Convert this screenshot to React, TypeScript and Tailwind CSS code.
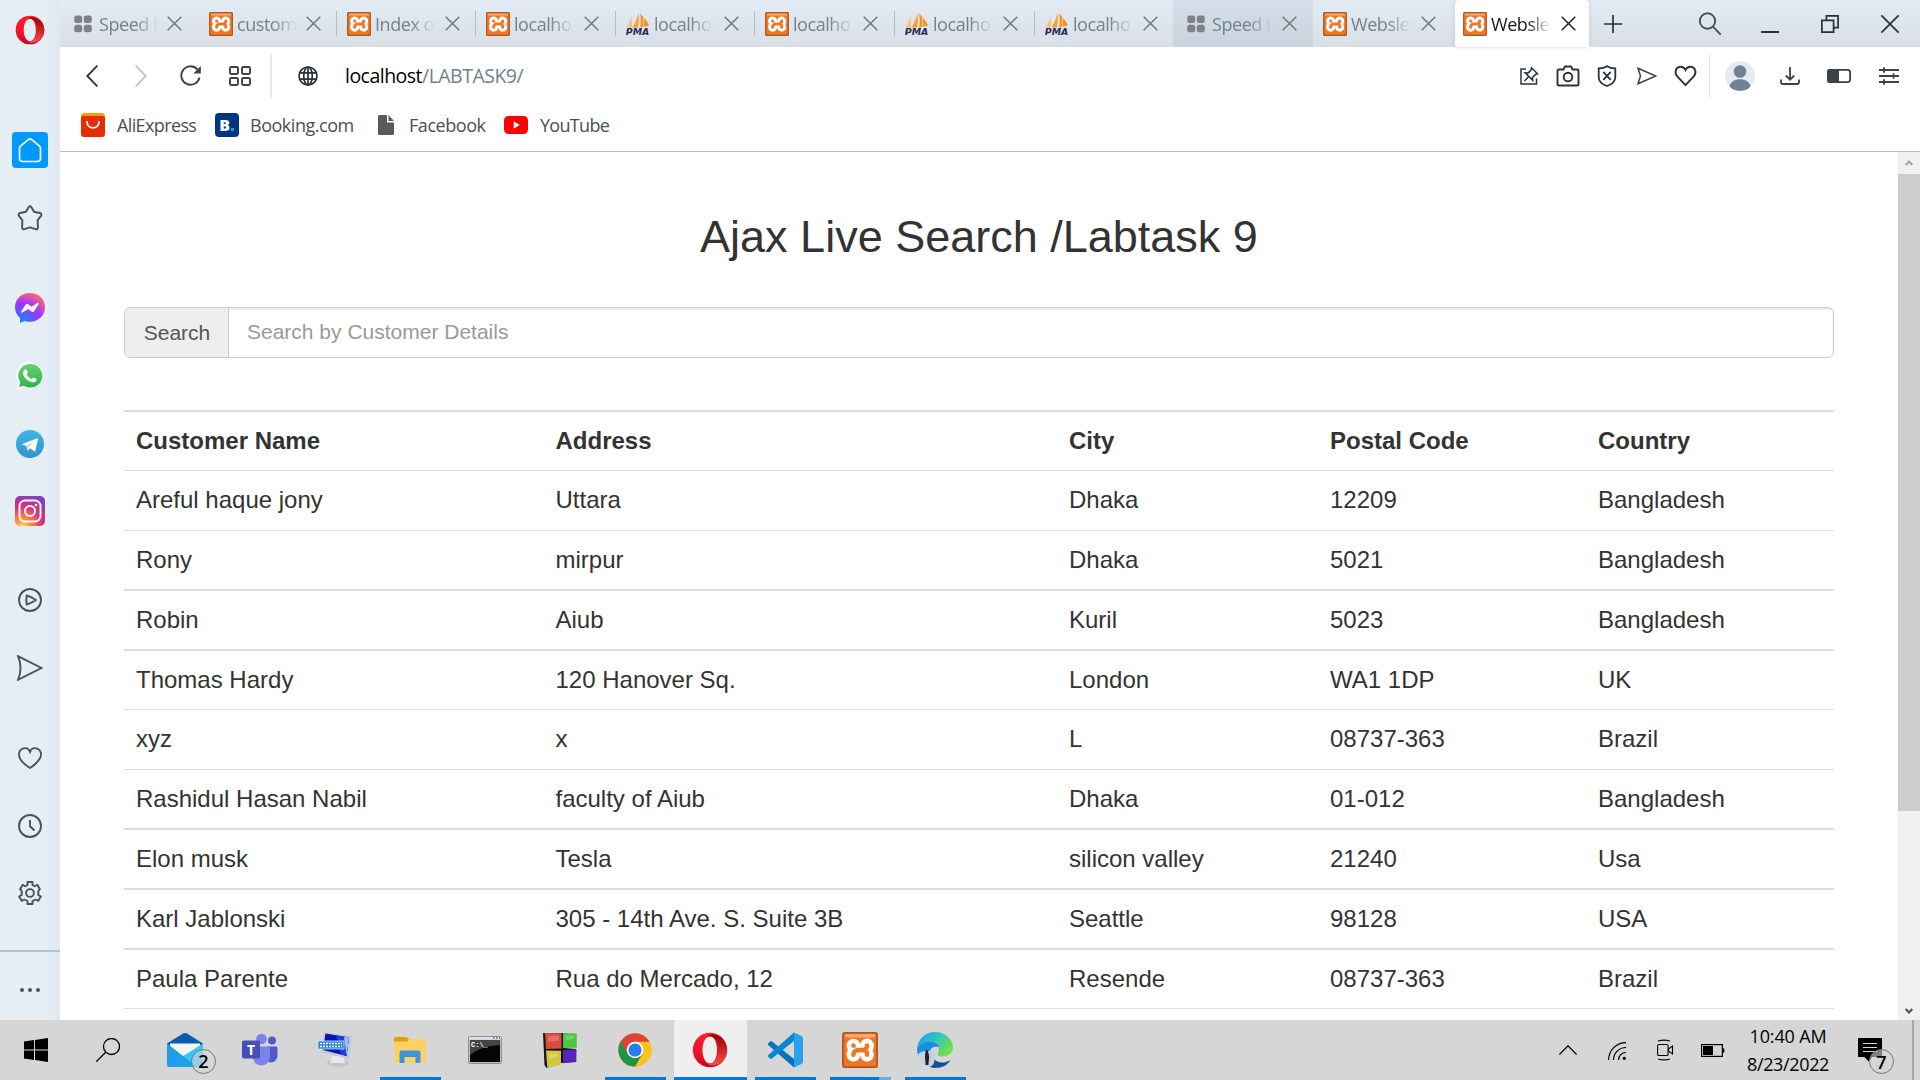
import React from "react";
import { SiXampp } from "react-icons/si";

type P = { children?: React.ReactNode };

const Xampp = ({ big = false }: { big?: boolean }) => (
  <svg viewBox="0 0 36 36" className={big ? "h-9 w-9 shrink-0" : "h-6 w-6 shrink-0"}>
    <rect x="3" y="4" width="30" height="28" fill="#fff" />
    <SiXampp x="-0.6" y="-0.4" size="37.4" color="#f07623" />
    <rect x="2.500" y="1.800" width="31" height="3.600" rx="1.800" fill="#fbc9a0" opacity=".6" />
    <rect x=".9" y=".9" width="34.200" height="34.200" rx="3.500" fill="none" stroke="#ad5a22" strokeWidth="1.800" />
  </svg>
);

const Pma = () => (
  <svg viewBox="0 0 24 24" className="h-6 w-6 shrink-0">
    <path d="M5.500 3.500 6 15.500H.8C3 12 4.700 8 5.500 3.500z" fill="#fbbf74" />
    <path d="M12.500.3C13 6 13 11 12 15.500H6.500C9.500 11 11.500 6 12.500.3z" fill="#fb9d2f" />
    <path d="M14 1.500c4 4 7.500 8 9 12l-8.700 2C15 11 15 6 14 1.500z" fill="#f98f1c" />
    <path d="M17.500 5v10" stroke="#fdd29b" strokeWidth="1" />
    <text x="-.2" y="23.300" fontFamily="DejaVu Sans" fontWeight="700" fontStyle="italic" fontSize="8.600" textLength="23.500" lengthAdjust="spacingAndGlyphs" fill="#2b2a5e">PMA</text>
  </svg>
);

const SpeedDots = () => (
  <svg viewBox="0 0 18 18" className="ml-1 mr-[3px] h-[18px] w-[18px] shrink-0" fill="#7e8286">
    <rect x=".2" y=".5" width="8" height="7.500" rx="2.500" />
    <rect x="9.800" y=".5" width="8" height="7.500" rx="2.500" />
    <rect x=".2" y="9.800" width="8" height="7.500" rx="2.500" />
    <rect x="9.800" y="9.800" width="8" height="7.500" rx="2.500" />
  </svg>
);

const Cross = ({ color }: { color: string }) => (
  <svg viewBox="0 0 15 15" className="h-[15px] w-[15px] shrink-0" stroke={color} strokeWidth="1.500" fill="none">
    <path d="M.7.7 14.300 14.300M14.300.7.7 14.300" />
  </svg>
);

const tabs = [
  { t: "Speed D", i: "s", box: "w-[136px] pl-[10px]", sep: false },
  { t: "custom", i: "x", box: "w-[141px] pl-[13px]", sep: false },
  { t: "Index o", i: "x", box: "w-[139px] pl-[10px]", sep: true },
  { t: "localho", i: "x", box: "w-[139px] pl-[10px]", sep: true },
  { t: "localho", i: "p", box: "w-[140px] pl-[11px]", sep: true },
  { t: "localho", i: "x", box: "w-[139px] pl-[10px]", sep: true },
  { t: "localho", i: "p", box: "w-[140px] pl-[11px]", sep: true },
  { t: "localho", i: "p", box: "w-[139px] pl-[11px]", sep: true },
  { t: "Speed D", i: "s", box: "w-[140px] pl-[10px] bg-linear-to-b from-[#d5dfe9] to-[#c9d3dd]", sep: false },
  { t: "Websle", i: "x", box: "w-[142px] pl-[10px]", sep: false },
];

const maskCls = "ml-1 w-[60px] shrink-0 whitespace-nowrap mask-r-from-60% mask-r-to-100% text-[18px] leading-[26px] tracking-[-0.45px]";

function TabBar() {
  return (
    <div className="flex h-[47px] bg-linear-to-b from-[#e3ebf4] to-[#d8dfe5]">
      {tabs.map((t, k) => (
        <div key={k} className={"flex h-[47px] shrink-0 items-center " + t.box}>
          {t.sep && <div className="-ml-[11px] mr-[10px] h-[25px] w-px bg-[#aebfcc]" />}
          {t.i === "s" ? <SpeedDots /> : t.i === "x" ? <Xampp /> : <Pma />}
          <div className={maskCls + " text-[#72828f]"}>{t.t}</div>
          <div className={k === 0 ? "ml-[8px]" : k === 1 ? "ml-[9px]" : "ml-[10px]"}><Cross color="#74797e" /></div>
        </div>
      ))}
      <div className="flex h-[47px] w-[134px] shrink-0 items-center rounded-t-[4px] bg-white pl-2 shadow-[0_0_4px_rgba(120,150,190,0.35)]">
        <Xampp />
        <div className={maskCls + " text-[#15181b]"}>Websle</div>
        <div className="ml-[10px]"><Cross color="#222" /></div>
      </div>
      <div className="flex flex-1 items-center pl-[15px] pr-[19px]">
        <svg viewBox="0 0 18 18" className="h-[18px] w-[18px]" stroke="#2b3034" strokeWidth="1.700"><path d="M9 0v18M0 9h18" /></svg>
        <svg viewBox="0 0 24 24" className="ml-[76px] h-6 w-6" stroke="#4a4f53" strokeWidth="1.900" fill="none"><circle cx="9.500" cy="9" r="7.700" /><path d="m15 14.700 7.700 8" /></svg>
        <svg viewBox="0 0 18 18" className="ml-[39px] h-[18px] w-[18px]" stroke="#2b3034" strokeWidth="2"><path d="M0 17h18" /></svg>
        <svg viewBox="0 0 18 18" className="ml-[42px] h-[18px] w-[18px]" stroke="#2b3034" strokeWidth="1.700" fill="none"><path d="M.9 5.400h11.700v11.700H.9z" /><path d="M5.400 5V.9h11.700v11.700h-4.500" /></svg>
        <svg viewBox="0 0 18 18" className="ml-[42px] h-[18px] w-[18px]" stroke="#2b3034" strokeWidth="1.700"><path d="M.3.300 17.700 17.700M17.700.3.300 17.700" /></svg>
      </div>
    </div>
  );
}

const Slot = ({ children }: P) => <div className="flex w-[39px] shrink-0 justify-center">{children}</div>;
const WideSlot = ({ children }: P) => <div className="flex w-[49.700px] shrink-0 justify-center">{children}</div>;

const HEART = "M12 21.500 3.400 12.400C.2 8.800 1.500 2.700 6.600 2.300c2.400-.1 4.400 1.200 5.400 3.400 1-2.200 3-3.500 5.400-3.400 5.100.4 6.400 6.500 3.200 10.100z";

function Toolbar() {
  return (
    <div className="flex h-[57px] items-center pl-[26px] pr-[6px]">
      <svg viewBox="0 0 12 22" className="h-[22px] w-3" stroke="#33383c" strokeWidth="1.900" fill="none"><path d="M11.400.6 1.300 11l10.100 10.400" /></svg>
      <svg viewBox="0 0 12 22" className="ml-[37px] h-[22px] w-3" stroke="#c4c7ca" strokeWidth="1.900" fill="none"><path d="M.6.600 10.700 11 .6 21.400" /></svg>
      <svg viewBox="0 0 21 21" className="ml-[33px] h-[21px] w-[21px]" fill="none" stroke="#3d4246" strokeWidth="1.900"><path d="M19.500 12.500A9.200 9.200 0 1 1 17.300 4.300" /><path d="M20.800 1v7.500h-7.500z" fill="#3d4246" stroke="none" /></svg>
      <svg viewBox="0 0 22 20" className="ml-7 h-5 w-[22px]" fill="none" stroke="#3d4246" strokeWidth="1.900"><rect x="1" y="1" width="8" height="7" rx="1.200" /><rect x="13" y="1" width="8" height="7" rx="1.200" /><rect x="1" y="12" width="8" height="7" rx="1.200" /><rect x="13" y="12" width="8" height="7" rx="1.200" /></svg>
      <div className="ml-[19px] h-11 w-[2px] bg-[#e8eaec]" />
      <svg viewBox="0 0 20 20" className="ml-[26px] h-5 w-5" fill="none" stroke="#27323c" strokeWidth="1.700"><circle cx="10" cy="10" r="9" /><ellipse cx="10" cy="10" rx="4.300" ry="9" /><path d="M10 1v18M1.800 6.800h16.400M1.800 13.200h16.400" /></svg>
      <div className="ml-[27px] text-[19.500px] leading-[28px] tracking-[-0.520px] text-[#71808e]"><span className="text-black">localhost</span>/LABTASK9/</div>
      <div className="flex-1" />
      <Slot>
        <svg viewBox="0 0 20 20" className="h-5 w-5" fill="none" stroke="#2a333b" strokeWidth="1.500"><path d="M7 3H2v15h15.500v-5.500" /><path d="m12.500 1.800 6 6-2 .6-3 3 .2 2.900-7.500-7.500 3 .1 2.900-2.800zM9.500 10.700 5.500 15" /></svg>
      </Slot>
      <Slot>
        <svg viewBox="0 0 24 22" className="h-[22px] w-6" fill="none" stroke="#2a333b" strokeWidth="1.900"><path d="M3 4.500h4.500L9 1.500h6l1.500 3H21q1.500 0 1.500 1.500v13.500q0 1-1.500 1H3q-1.500 0-1.500-1V6q0-1.500 1.500-1.500z" /><circle cx="12" cy="12" r="4.300" /></svg>
      </Slot>
      <Slot>
        <svg viewBox="0 0 20 22" className="h-[22px] w-5" fill="none" stroke="#2a333b" strokeWidth="1.800"><path d="M10 1.200C7.500 3 4.800 3.500 1.700 3.500V12c0 4.500 4 7.500 8.300 9 4.300-1.500 8.300-4.500 8.300-9V3.500c-3.100 0-5.800-.5-8.300-2.300z" /><path d="m6.300 6.800 7.400 8M13.700 6.800l-7.400 8" /></svg>
      </Slot>
      <div className="w-px shrink-0" />
      <Slot>
        <svg viewBox="0 0 20 18" className="h-[18px] w-5" fill="none" stroke="#3a4248" strokeWidth="1.500"><path d="M1 1.200 18.800 9 1 16.800 3.500 9z" /></svg>
      </Slot>
      <Slot>
        <svg viewBox="0 0 24 24" className="h-6 w-[23px]" fill="none" stroke="#2a333b" strokeWidth="2"><path d={HEART} /></svg>
      </Slot>
      <div className="ml-[4px] mr-[5px] h-11 w-px bg-[#e4e6e8]" />
      <WideSlot>
        <svg viewBox="0 0 30 30" className="h-[30px] w-[30px]"><circle cx="15" cy="15" r="15" fill="#e3ebf3" /><circle cx="15" cy="10.500" r="6.300" fill="#6f8193" /><path d="M4.500 25C6 20.500 10 18.300 15 18.300S24 20.500 25.500 25C22.500 31.300 7.500 31.300 4.500 25z" fill="#6f8193" /></svg>
      </WideSlot>
      <WideSlot>
        <svg viewBox="0 0 20 18" className="h-[18px] w-5" fill="none" stroke="#3d4246" strokeWidth="1.800"><path d="M10 0v12.500M5.800 8.500 10 12.700l4.200-4.200M1 12.500V15q0 2 2 2h14q2 0 2-2v-2.500" /></svg>
      </WideSlot>
      <WideSlot>
        <svg viewBox="0 0 24 14" className="h-[14px] w-6"><rect x=".9" y=".9" width="22.200" height="12.200" rx="2.500" fill="none" stroke="#3d4246" strokeWidth="1.800" /><path d="M3 0h9v14H3q-3 0-3-3V3q0-3 3-3z" fill="#3d4246" /></svg>
      </WideSlot>
      <WideSlot>
        <svg viewBox="0 0 20 18" className="h-[18px] w-5" fill="none" stroke="#3d4246" strokeWidth="1.800"><path d="M0 3h20M0 9h20M0 15h20M5 .3v5.400M14.500 6.300v5.400M5 12.300v5.400" /></svg>
      </WideSlot>
    </div>
  );
}

function Bookmarks() {
  const label = "pb-px text-[18px] leading-[24px] text-[#4a4f54]";
  return (
    <div className="flex h-[48px] items-center border-b border-[#b3c1ca] pb-[5px] pl-[21px]">
      <svg viewBox="0 0 24 24" className="h-6 w-6"><rect width="24" height="24" rx="3.500" fill="#ff9a00" /><path d="M0 5q0-2 2.500-2h19Q24 3 24 5v15.500q0 3.500-3.500 3.500h-17Q0 24 0 20.500z" fill="#e62e04" /><path d="M6 9c.5 7.800 11.500 7.800 12 0" fill="none" stroke="#fff" strokeWidth="1.900" strokeLinecap="round" /></svg>
      <span className={label + " ml-3 w-[98px] tracking-[-0.620px]"}>AliExpress</span>
      <div className="flex h-6 w-6 items-center justify-center rounded-[4px] bg-[#003580] text-[16px] font-extrabold text-white">B<span className="text-[#25a2e0]">.</span></div>
      <span className={label + " ml-[11px] w-[128px] tracking-[-0.480px]"}>Booking.com</span>
      <svg viewBox="0 0 16 20" className="h-5 w-4"><path d="M0 1.500Q0 0 1.500 0H9v7.500h7v11q0 1.500-1.500 1.500h-13Q0 20 0 18.500z" fill="#58595b" /><path d="M10.500 0 16 6h-5.500z" fill="#58595b" /></svg>
      <span className={label + " ml-[15px] w-[95px] tracking-[-0.450px]"}>Facebook</span>
      <svg viewBox="0 0 24 18" className="h-[18px] w-6"><rect width="24" height="18" rx="4.500" fill="#f00" /><path d="m9.700 5.300 6 3.700-6 3.700z" fill="#fff" /></svg>
      <span className={label + " ml-3 tracking-[-0.700px]"}>YouTube</span>
    </div>
  );
}

const SideSlot = ({ children }: P) => <div className="flex h-[67.800px] shrink-0 items-center justify-center">{children}</div>;

const OperaMark = ({ cls, id }: { cls: string; id: string }) => (
  <svg viewBox="0 0 36 36" className={cls}>
    <defs>
      <linearGradient id={id + "a"} x1="0" y1="0" x2="0" y2="1"><stop offset="0" stopColor="#ff1b2d" /><stop offset=".6" stopColor="#f0142a" /><stop offset="1" stopColor="#c4061c" /></linearGradient>
      <linearGradient id={id + "b"} x1="0" y1="0" x2="0" y2="1"><stop offset="0" stopColor="#9c0000" /><stop offset="1" stopColor="#ff4b4b" /></linearGradient>
    </defs>
    <path d="M18 .8a17.200 17.200 0 1 0 0 34.400A17.200 17.200 0 1 0 18 .8zM18 4.500c4.500 0 7 6 7 13.500s-2.500 13.500-7 13.500S10.500 25.500 10.500 18 13.500 4.500 18 4.500z" fill={"url(#" + id + "a)"} fillRule="evenodd" />
    <path d="M15 4.500C22-1 35.200 6 35.200 18S22 37 15 31.500c6.500 2 11-4.500 11-13.500S21.500 2.500 15 4.500z" fill={"url(#" + id + "b)"} />
  </svg>
);

function Sidebar() {
  const g = "#48525b";
  return (
    <aside className="flex w-[60px] shrink-0 flex-col bg-linear-to-r from-[#e5edf5] from-75% to-[#dfe7f0]">
      <div className="flex h-[116px] shrink-0 items-start justify-center pt-[15px]"><OperaMark cls="h-[30px] w-[30px]" id="os" /></div>
      <SideSlot>
        <div className="flex h-9 w-9 items-center justify-center rounded-[4px] bg-[#0099ff]">
          <svg viewBox="0 0 24 26" className="h-[26px] w-6" fill="none" stroke="#fff" strokeWidth="1.700"><path d="M1.500 11.500q0-1.500 1-2.300L10.500 2.400q1.500-1.200 3 0l8 6.800q1 .8 1 2.300V21q0 3.500-3.500 3.500H5q-3.500 0-3.500-3.500z" /></svg>
        </div>
      </SideSlot>
      <SideSlot>
        <svg viewBox="0 0 26 26" className="h-[26px] w-[26px]" fill="none" stroke={g} strokeWidth="1.900" strokeLinejoin="round"><path d="M11.600 2.200q1.400-1.900 2.800 0l2.600 4.600 5.700 1.200q2.500.7 1.500 2.600l-3.600 4.800.3 6.900q-.2 2.500-2.300 1.900L13 22.300l-5.600 1.900q-2.100.6-2.300-1.900l.3-6.900-3.600-4.800Q.8 8.700 3.300 8L9 6.800z" /></svg>
      </SideSlot>
      <div className="h-[22.500px] shrink-0" />
      <SideSlot>
        <svg viewBox="0 0 30 30" className="h-[30px] w-[30px]">
          <defs><radialGradient id="ms" cx=".2" cy="1" r="1.100"><stop offset="0" stopColor="#0a8fff" /><stop offset=".6" stopColor="#a033ff" /><stop offset="1" stopColor="#ff6c70" /></radialGradient></defs>
          <path d="M15 0C6.500 0 0 6 0 14.300c0 4.500 1.900 8.100 5 10.700v5l4.500-2.100c1.700.6 3.500.9 5.500.9 8.500 0 15-6.200 15-14.500S23.500 0 15 0z" fill="url(#ms)" />
          <path d="m6 18.700 4.500-7q1.100-1.600 2.700-.4l3.400 2.500 5.900-3.700q1.600-.6 1.200.9L19.300 18q-1.100 1.600-2.700.4l-3.400-2.500-6 3.700q-1.500.6-1.200-.9z" fill="#fff" />
        </svg>
      </SideSlot>
      <SideSlot>
        <svg viewBox="0 0 30 30" className="h-[30px] w-[30px]">
          <defs><linearGradient id="wa" x1="0" y1="0" x2="0" y2="1"><stop offset="0" stopColor="#66d170" /><stop offset="1" stopColor="#2fb544" /></linearGradient></defs>
          <path d="M15 .8A13.500 13.500 0 0 0 3.300 21.500L1.100 29l7.700-2.300A13.500 13.500 0 1 0 15 .8z" fill="#fbfcfb" />
          <path d="M15 3A11.600 11.600 0 0 0 5.400 21.200l-1.300 4.900 5-1.400A11.800 11.800 0 1 0 15 3z" fill="url(#wa)" />
          <path d="M9.800 8.500c.8-.7 1.700-.3 2 .4l1 2.400c.2.700-1.200 1.800-1 2.300 1 2.100 2.500 3.400 4.700 4.300.7.200 1.500-1.600 2.100-1.400l2.700 1.300c.7.400.2 2-.6 2.700-2.300 1.900-6.600.4-9.300-2.200-2.800-2.700-4.900-7-1.600-9.800z" fill="#fff" />
        </svg>
      </SideSlot>
      <SideSlot>
        <svg viewBox="0 0 28 28" className="h-7 w-7">
          <defs><linearGradient id="tg" x1="0" y1="0" x2="0" y2="1"><stop offset="0" stopColor="#41b4e6" /><stop offset="1" stopColor="#2f95d0" /></linearGradient></defs>
          <circle cx="14" cy="14" r="14" fill="url(#tg)" />
          <path d="M5.500 14.300 21.300 8.300q.9-.1.700.8l-2.600 11.700q-.3.900-1.200.5l-4.200-3.100-2.500 2.500-1.300-4.800z" fill="#fff" />
          <path d="m10.200 15.900 8.300-5.200-6.200 6.400-.8 3.600z" fill="#b9d8ea" />
        </svg>
      </SideSlot>
      <SideSlot>
        <svg viewBox="0 0 30 30" className="h-[30px] w-[30px]">
          <defs><radialGradient id="ig" cx=".25" cy="1" r="1.100"><stop offset="0" stopColor="#ffd15c" /><stop offset=".3" stopColor="#fb7b45" /><stop offset=".6" stopColor="#d92e7f" /><stop offset="1" stopColor="#7a3fc4" /></radialGradient></defs>
          <rect width="30" height="30" rx="5" fill="url(#ig)" />
          <rect x="4.500" y="4.500" width="21" height="21" rx="5.500" fill="none" stroke="#fff" strokeWidth="1.900" />
          <circle cx="15" cy="15" r="5" fill="none" stroke="#fff" strokeWidth="1.900" />
          <circle cx="21" cy="9" r="1.300" fill="#fff" />
        </svg>
      </SideSlot>
      <div className="h-[21.300px] shrink-0" />
      <SideSlot>
        <svg viewBox="0 0 24 24" className="h-6 w-6" fill="none" stroke={g} strokeWidth="1.900" strokeLinejoin="round"><circle cx="12" cy="12" r="11" /><path d="M8.700 7.500q5 1.500 9.200 4.500-4.200 3-9.200 4.500-.8-4.500 0-9z" /></svg>
      </SideSlot>
      <SideSlot>
        <svg viewBox="0 0 26 26" className="h-[26px] w-[26px]" fill="none" stroke={g} strokeWidth="1.900"><path d="M1 1.200 24.500 13 1 24.800Q6 13 1 1.200z" /></svg>
      </SideSlot>
      <div className="h-[21.700px] shrink-0" />
      <SideSlot>
        <svg viewBox="0 0 24 22" className="h-[22px] w-6" fill="none" stroke={g} strokeWidth="1.900"><path d="M12 21Q1 14 1 7.500C1 1 9.500-1.500 12 4.800 14.500-1.500 23 1 23 7.500 23 14 12 21 12 21z" /></svg>
      </SideSlot>
      <SideSlot>
        <svg viewBox="0 0 24 24" className="h-6 w-6" fill="none" stroke={g} strokeWidth="1.900"><circle cx="12" cy="12" r="11" /><path d="M12 6v6.300l4.500 4.200" /></svg>
      </SideSlot>
      <SideSlot>
        <svg viewBox="0 0 24 24" className="h-6 w-6" fill="none" stroke={g} strokeWidth="1.900" strokeLinejoin="round"><circle cx="12" cy="12" r="3.900" /><path d="M9.500 1h5v3l2.200 1.300 2.600-1.500 2.500 4.300-1.500 2 0 3.800 2.500 1.600-2.500 4.300-2.600-1.300-3.200 1.500V23h-5v-3l-3.200-1.500-2.600 1.300-2.500-4.300 2.500-1.600V10.100l-1.500-2 2.500-4.300 2.600 1.500L9.500 4z" /></svg>
      </SideSlot>
      <div className="mt-[22.500px] h-[2px] shrink-0 bg-[#b3c1cb]" />
      <div className="flex flex-1 items-center justify-center gap-1 pt-[8px]">
        <i className="h-1 w-1 rounded-full bg-[#48525b]" /><i className="h-1 w-1 rounded-full bg-[#48525b]" /><i className="h-1 w-1 rounded-full bg-[#48525b]" />
      </div>
    </aside>
  );
}

const cols = "grid grid-cols-[419.500px_513.500px_261px_268px_1fr] pl-3 border-[#dddddd] ";
const rows: [string, string[]][] = [
  ["h-[60px] border-t", ["Areful haque jony", "Uttara", "Dhaka", "12209", "Bangladesh"]],
  ["h-[59px] border-t", ["Rony", "mirpur", "Dhaka", "5021", "Bangladesh"]],
  ["h-[60px] border-t-2", ["Robin", "Aiub", "Kuril", "5023", "Bangladesh"]],
  ["h-[60px] border-t-2", ["Thomas Hardy", "120 Hanover Sq.", "London", "WA1 1DP", "UK"]],
  ["h-[60px] border-t", ["xyz", "x", "L", "08737-363", "Brazil"]],
  ["h-[59px] border-t", ["Rashidul Hasan Nabil", "faculty of Aiub", "Dhaka", "01-012", "Bangladesh"]],
  ["h-[60px] border-t-2", ["Elon musk", "Tesla", "silicon valley", "21240", "Usa"]],
  ["h-[60px] border-t-2", ["Karl Jablonski", "305 - 14th Ave. S. Suite 3B", "Seattle", "98128", "USA"]],
  ["h-[60px] border-t-2", ["Paula Parente", "Rua do Mercado, 12", "Resende", "08737-363", "Brazil"]],
  ["h-[12px] border-t", []],
];

function Page() {
  return (
    <div className="flex min-h-0 flex-1">
      <main className="flex-1 overflow-hidden bg-white pl-16 pr-16 font-['Liberation_Sans',Arial,sans-serif] text-[#333]">
        <h2 className="mt-[60px] text-center text-[45px] leading-[50px]">Ajax Live Search /Labtask 9</h2>
        <div className="mt-[45px] flex h-[51px] overflow-hidden rounded-[6px] border border-[#ccc]">
          <div className="flex w-[104px] items-center justify-center border-r border-[#ccc] bg-[#eee] pl-px text-[21px] text-[#555]">Search</div>
          <div className="flex flex-1 items-center pb-[2px] pl-[18px] text-[21px] text-[#999] shadow-[inset_0_2px_2px_rgba(0,0,0,0.075)]">Search by Customer Details</div>
        </div>
        <div className="mt-[52px] text-[24px] leading-[34px]">
          <div className={cols + "h-[60px] border-t-2 pt-3 font-bold"}>
            {["Customer Name", "Address", "City", "Postal Code", "Country"].map((h) => <div key={h}>{h}</div>)}
          </div>
          {rows.map(([c, r], k) => (
            <div key={k} className={cols + c + (r.length ? " pt-3" : "")}>
              {r.map((v, j) => <div key={j}>{v}</div>)}
            </div>
          ))}
        </div>
      </main>
      <div className="flex w-[22px] flex-col bg-[#f1f1f1]">
        <div className="flex h-[22px] items-center justify-center"><svg viewBox="0 0 8 6" className="h-[6px] w-2" fill="none" stroke="#a5a5a5" strokeWidth="2"><path d="m.7 5 3.300-3.500L7.300 5" /></svg></div>
        <div className="h-[637px] bg-[#cdcdcd]" />
        <div className="flex-1" />
        <div className="flex h-[19px] items-center justify-center"><svg viewBox="0 0 8 6" className="h-[6px] w-2" fill="none" stroke="#505050" strokeWidth="2"><path d="m.7 1 3.300 3.500L7.300 1" /></svg></div>
      </div>
    </div>
  );
}

const Task = ({ children, line, active }: P & { line?: string; active?: boolean }) => (
  <div className="flex h-[60px] w-[75px] shrink-0 justify-center">
    <div className={"flex h-[60px] flex-col items-center justify-end " + (active ? "w-[73px] bg-[#efefef]" : "w-[61px]")}>
      <div className="flex flex-1 items-center justify-center pt-[3px]">{children}</div>
      <div className={"h-[3px] w-full " + (line ?? "")} />
    </div>
  </div>
);

const Badge = ({ n, cls }: { n: string; cls: string }) => (
  <span className={"absolute flex h-[25px] w-[25px] items-center justify-center rounded-full border border-[#777] bg-[#d6d6d6]/60 text-[18px] font-semibold leading-none text-black " + cls}>{n}</span>
);

function Taskbar() {
  const blue = "bg-[#0078d7]";
  return (
    <div className="flex h-[60px] shrink-0 items-center bg-[#d6d6d6]">
      <div className="flex w-[72px] justify-center"><svg viewBox="0 0 24 24" className="h-6 w-6"><path d="M0 3.400 10 2v9.500H0zM11 1.900 24 0v11.500H11zM0 12.500h10V22L0 20.600zM11 12.500h13V24l-13-1.900z" /></svg></div>
      <div className="flex w-[75.500px] justify-center"><svg viewBox="0 0 24 24" className="mr-[3px] h-6 w-6" fill="none" stroke="#000" strokeWidth="1.300"><circle cx="15.500" cy="8.500" r="8" /><path d="M9.700 14.300.3 23.700" /></svg></div>
      <Task>
        <div className="relative">
          <svg viewBox="0 0 36 34" className="-mt-[1px] h-[34px] w-9"><path d="M0 10.500 16 .6q2-1.200 4 0L36 10.500V22H0z" fill="#0a5cab" /><path d="M3 10.500h30v9L18 25 3 19z" fill="#f4f4f4" /><path d="M36 10.500v21q0 2.500-2.500 2.500H20L13 25z" fill="#35c6f8" /><path d="M0 10.500 30 34H2Q0 34 0 32z" fill="#1e9fe8" /></svg>
          <Badge n="2" cls="left-[24px] top-[15px]" />
        </div>
      </Task>
      <Task>
        <svg viewBox="0 0 36 34" className="h-[34px] w-9"><circle cx="19.500" cy="6" r="5.300" fill="#7b83eb" /><circle cx="30" cy="7.500" r="4" fill="#5059c9" /><path d="M25 13.500h9q1.500 0 1.500 1.500v8q-1 6-7 6.500-4-.5-5-4z" fill="#5059c9" /><path d="M11 13.500h15.500q1.500 0 1.500 1.500v9.500Q27 32 19.500 32.500 12 32 11 25z" fill="#7b83eb" /><rect x="0" y="7.500" width="18" height="18" rx="1.800" fill="#464eb8" /><text x="9" y="21.500" textAnchor="middle" fontFamily="Open Sans" fontWeight="700" fontSize="14" fill="#fff">T</text></svg>
      </Task>
      <Task>
        <svg viewBox="0 0 36 36" className="h-9 w-9"><ellipse cx="21" cy="31" rx="11" ry="4" fill="#c3c5c7" /><path d="M15 24h11l2 7H13z" fill="#e8e9ea" /><path d="m7 0 28 4-3 23L4 20z" fill="#c3c9d0" /><path d="m8.500 1.500 23.500 4-2.500 18.500L6 18z" fill="#0712b8" /><path d="m19 3.300 13 2.200-2.500 18.500L24 22.600z" fill="#1d3fd6" /><path d="m27 5 5 .6-2.500 17.900z" fill="#9fc0fb" /><rect x="1" y="9" width="26" height="8" fill="#2c84d6" stroke="#d5e9fb" strokeWidth=".8" /><path d="M3 11.500h22M3 14.500h22" stroke="#fff" strokeWidth="1.500" strokeDasharray="2 1" /></svg>
      </Task>
      <Task line={blue}>
        <svg viewBox="0 0 32 26" className="h-[26px] w-8"><path d="M0 4.500h13l2-2.500h15.500Q32 2 32 3.500v21q0 1.500-1.500 1.500h-29Q0 26 0 24.500z" fill="#fed165" /><path d="M0 4.500V1.500Q0 0 1.500 0H12q1 0 1.500.7l1.300 1.600L13 4.500z" fill="#dfa00a" /><path d="M5.500 26V15.500Q5.500 13.500 7.500 13.500h17q2 0 2 2V26h-5v-6h-11v6z" fill="#3d96dc" /></svg>
      </Task>
      <Task>
        <svg viewBox="0 0 34 28" className="h-7 w-[34px]"><rect x=".6" y=".6" width="32.800" height="26.800" rx="1" fill="#c3c9ce" stroke="#82898f" /><path d="M1 1h32v2.500H1z" fill="#dbe4ec" /><path d="M2 4h30v22H2z" fill="#050505" /><path d="M2 4h30v5Q12 10 2 19z" fill="#444" /><path d="M25 2h1.500M28 2h1.500M31 2h1" stroke="#4d6274" strokeWidth="1.300" /><text x="3" y="11" fontFamily="Liberation Mono" fontWeight="700" fontSize="7" fill="#fff">C:\_</text></svg>
      </Task>
      <Task>
        <svg viewBox="0 0 36 36" className="h-9 w-9"><path d="m1 1 2.500.3L19 1l3 0v15l12 1 .3 13L19 31 4.500 36 2.500 33z" fill="#151515" /><path d="M3 1 19.500 1.300v15.200L4 17z" fill="#d94b41" /><path d="M21 1 34.800 1.500v14.300L21 16z" fill="#4dc63a" /><path d="m4 18.500 15 .2v14L5.300 35.700z" fill="#d0c83f" /><path d="M21 18.200 34.500 17.200 34 29.700l-13 1.600z" fill="#5a22bd" /><path d="m6 4 11-.5v5L6 10zM23.500 3.500l9 .3v3l-9 2zM7 21.500l9 .3v3L7.500 27z" fill="#fff" opacity=".22" /></svg>
      </Task>
      <Task line={blue}>
        <svg viewBox="0 0 34 34" className="h-[34px] w-[34px]"><circle cx="17" cy="17" r="16.700" fill="#fcc21b" /><path d="M17 17 2.600 8.600A16.700 16.700 0 0 0 17 33.700L24.200 21z" fill="#209349" /><path d="M17 17 9.800 21.200 2.600 8.600a16.700 16.700 0 0 1 28.900 0L31.500 8.700H17z" fill="#dd4335" /><circle cx="17" cy="17" r="8.300" fill="#fff" /><circle cx="17" cy="17" r="6.600" fill="#2b7be9" /></svg>
      </Task>
      <Task line={blue} active><OperaMark cls="h-9 w-9" id="ot" /></Task>
      <Task line={blue}>
        <svg viewBox="0 0 36 36" className="h-9 w-9"><path d="M1 11.500 3 9.500q1-.8 2 0L27 27v8.500L1.200 13q-.8-.7-.2-1.500z" fill="#0a71bb" /><path d="M1 24.500 3 26.500q1 .8 2 0L27 9V.5L1.200 23q-.8.700-.2 1.500z" fill="#0a85d1" /><path d="m26.500.2 8 3.700q1.500.8 1.500 2.500v23.200q0 1.700-1.500 2.500l-8 3.700q.5-.5.5-1.500V1.700q0-1-.5-1.500z" fill="#28a1ef" /></svg>
      </Task>
      <Task line="bg-linear-to-r from-[#0078d7] from-80% to-[#68aee8] to-80%"><Xampp big /></Task>
      <Task line={blue}>
        <svg viewBox="0 0 36 36" className="h-9 w-9">
          <defs><linearGradient id="ed" x1="0" y1="0" x2="1" y2=".5"><stop offset="0" stopColor="#1b9de2" /><stop offset=".5" stopColor="#2cc3c8" /><stop offset="1" stopColor="#6fe04f" /></linearGradient></defs>
          <path d="M0 17C1 6 9 0 18 0c10 0 18 7 18 15 0 6-5 9.500-10 9.500-4 0-6-1.500-5-3.500C24 15 19 9.500 13 9.500 7 9.500 2 12.500 0 17z" fill="url(#ed)" />
          <path d="M13 16c-1 10 7 15 13 14.500 3-.2 6-1.700 7.500-2.500C31 33 25 36 18 36c-5 0-9-3-9-9z" fill="#124f9e" />
          <path d="M0 17c2-5 7-7.500 13-7.500 5 0 8 2.500 9 5.500-6-1-10 1-9 8L1.500 24Q-.2 20 0 17z" fill="#198fdd" />
          <path d="M1 22q3-2.500 7-3h7q3 1 3 5l-1 7q-2 4-6 4-8-3-10-13z" fill="#c6d3da" />
          <path d="M8.500 19.500q0-1.300 1.300-1.300t1.300 1.300l1.100 5-.8 8.500H8.600l-.6-8.500z" fill="#1a2030" />
        </svg>
      </Task>
      <div className="flex-1" />
      <svg viewBox="0 0 18 10" className="h-[10px] w-[18px]" fill="none" stroke="#000" strokeWidth="1.300"><path d="M.4 9.500 9 .9l8.600 8.600" /></svg>
      <svg viewBox="0 0 18 18" className="ml-[31px] mt-[2px] h-[18px] w-[18px]" fill="none" stroke="#000" strokeWidth="1.200"><path d="M.6 18A17.400 17.400 0 0 1 18 .6M5.500 18A12.500 12.500 0 0 1 18 5.500M10.500 18a7.500 7.500 0 0 1 7.500-7.500" /><circle cx="16.300" cy="16.300" r="1.600" fill="#000" stroke="none" /></svg>
      <svg viewBox="0 0 17 22" className="ml-[31px] h-[22px] w-[17px]" fill="none" stroke="#000" strokeWidth="1.100"><rect x=".6" y="5.500" width="10.500" height="11" rx="1.300" /><path d="m11.500 10 4-3v8l-4-3zM1 2Q7 .2 13 2M1 20q6 1.800 12 0" /></svg>
      <svg viewBox="0 0 24 13" className="ml-[27px] h-[13px] w-6"><rect x=".6" y=".6" width="20.800" height="11.800" fill="none" stroke="#000" strokeWidth="1.200" /><path d="M2 2h10v9H2zM22 4.500h1.300v4H22z" /></svg>
      <div className="ml-[20px] mr-px w-[86px] text-center text-[18px] leading-[28px] text-black">
        <div className="whitespace-nowrap tracking-[-0.150px]">10:40 AM</div>
        <div className="whitespace-nowrap tracking-[-0.350px]">8/23/2022</div>
      </div>
      <div className="relative ml-[26px] mr-[30px]">
        <svg viewBox="0 0 24 24" className="h-6 w-6"><path d="M0 0h24v19H14.500L10.500 23.500 6.500 19H0z" /><path d="M5 5.500h14M5 9.500h14M5 13.500h14" stroke="#d6d6d6" strokeWidth="1.100" /></svg>
        <Badge n="7" cls="left-[11px] top-[11px]" />
      </div>
      <div className="mr-[6px] h-full w-[2px] bg-[#a6a6a6]" />
    </div>
  );
}

export default function App() {
  return (
    <div className="flex h-[1080px] w-[1920px] flex-col overflow-hidden bg-white font-['Open_Sans',sans-serif]">
      <div className="flex h-[1020px] shrink-0">
        <Sidebar />
        <div className="flex min-w-0 flex-1 flex-col">
          <TabBar />
          <Toolbar />
          <Bookmarks />
          <Page />
        </div>
      </div>
      <Taskbar />
    </div>
  );
}
